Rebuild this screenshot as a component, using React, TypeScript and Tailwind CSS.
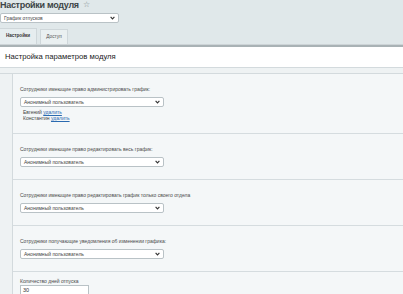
import React from "react";

function Chevron() {
  return (
    <svg width="5" height="4" viewBox="0 0 5 4" className="shrink-0">
      <polyline points="0.6,0.8 2.5,2.9 4.4,0.8" fill="none" stroke="#333" strokeWidth="1.1" />
    </svg>
  );
}

function Select({ text, w }: { text: string; w: string }) {
  return (
    <div
      className={`${w} h-[10px] bg-white border border-[#b9c2c6] rounded-[2px] flex items-center justify-between pl-[3px] pr-[3px] text-[5px] leading-[6px] text-[#444]`}
    >
      <span>{text}</span>
      <Chevron />
    </div>
  );
}

function Section({
  label,
  first,
  children,
}: {
  label: string;
  first?: boolean;
  children?: React.ReactNode;
}) {
  return (
    <div className={`${first ? "" : "border-t border-[#d5dcdf]"} pl-[7px] pt-[12px] pb-[12px]`}>
      <div className="text-[5px] leading-[6px] text-[#4a4a4a]">{label}</div>
      <div className="mt-[5px]">
        <Select text="Анонимный пользователь" w="w-[144px]" />
      </div>
      {children}
    </div>
  );
}

export default function App() {
  return (
    <div className="w-[403px] h-[294px] overflow-hidden bg-[#eef2f3] font-['Liberation_Sans',Arial,sans-serif]">
      {/* top band */}
      <div className="h-[44px] bg-[#e0e8ea]">
        <div className="flex items-start h-[12px]">
          <span className="text-[9px] leading-[10px] font-bold text-[#3c4446] tracking-[-0.3px]">
            Настройки модуля
          </span>
          <span className="ml-[4px] text-[8px] leading-[10px] text-[#7f898c]">☆</span>
        </div>
        <div className="mt-[1px]">
          <Select text="График отпусков" w="w-[119px]" />
        </div>
        <div className="mt-[5px] flex items-end gap-[3px] h-[16px]">
          <div className="w-[37px] h-[16px] bg-[#e6edef] border-t border-r border-[#cfd7da] flex items-center justify-center text-[4.6px] font-bold text-[#333]">
            Настройки
          </div>
          <div className="w-[28px] h-[15px] bg-[#eaf0f1] border-t border-x border-[#cfd7da] flex items-center justify-center text-[4.8px] text-[#555]">
            Доступ
          </div>
        </div>
      </div>
      <div className="h-[1px] bg-[#cdd4d7]" />
      <div className="h-[2px] bg-[#a9b2b5]" />
      {/* white header */}
      <div className="h-[20px] bg-white flex items-center pl-[5px] text-[7.7px] leading-[8px] text-[#222]">
        Настройка параметров модуля
      </div>
      <div className="h-[1px] bg-[#d3dadd]" />
      <div className="h-[5px] bg-[#eef2f3]" />
      <div className="border-t border-[#d3dadd] bg-[#eef2f3] pl-[12px]">
        <div className="border-l border-[#d3dadd] bg-[#f4f7f8]">
          <Section label="Сотрудники имеющие право администрировать график:" first>
            <div className="mt-[2px] pl-[3px] text-[5px] leading-[6px] text-[#444]">
              <div>
                Евгений <span className="text-[#2a6ab0] underline">удалить</span>
              </div>
              <div>
                Константин <span className="text-[#2a6ab0] underline">удалить</span>
              </div>
            </div>
          </Section>
          <Section label="Сотрудники имеющие право редактировать весь график:" />
          <Section label="Сотрудники имеющие право редактировать график только своего отдела" />
          <Section label="Сотрудники получающие уведомления об изменении графика:" />
          <div className="border-t border-[#d5dcdf] pl-[7px] pt-[6px]">
            <div className="text-[5px] leading-[6px] text-[#4a4a4a]">Количество дней отпуска</div>
            <div className="mt-[1px] w-[69px] h-[11px] bg-white border border-[#b9c2c6] flex items-center pl-[2px] text-[5.5px] text-[#333]">
              30
            </div>
          </div>
        </div>
      </div>
    </div>
  );
}
